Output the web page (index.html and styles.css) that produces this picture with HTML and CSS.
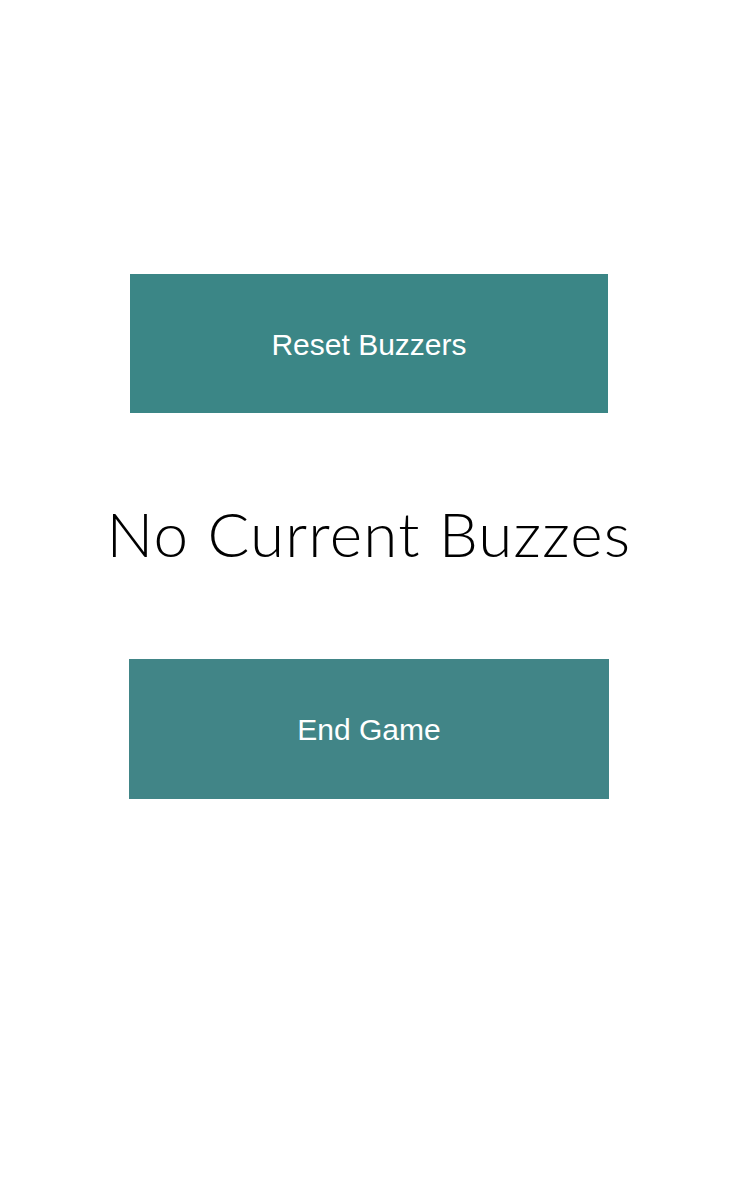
FILE: index.html
```html
<!DOCTYPE html>
<html>
<head>
<meta charset="utf-8">
<link rel="stylesheet" href="styles.css">
</head>
<body>
<main class="page">
  <button class="btn btn-reset">Reset Buzzers</button>
  <h1 class="status">No Current Buzzes</h1>
  <button class="btn btn-end">End Game</button>
</main>
</body>
</html>
```
FILE: styles.css
```css
html, body {
  margin: 0;
  padding: 0;
  background: #ffffff;
}
.page {
  display: flex;
  flex-direction: column;
  align-items: center;
  padding-top: 274px;
  padding-left: 3px;
  width: 735px;
  box-sizing: border-box;
}
.btn {
  border: none;
  margin: 0;
  color: #ffffff;
  font-family: "Liberation Sans", Arial, sans-serif;
  font-size: 30px;
  height: 140px;
  padding: 2px 0 0 0;
  cursor: pointer;
}
.btn-reset {
  width: 478px;
  height: 139px;
  background: #3b8686;
}
.btn-end {
  width: 480px;
  background: #418587;
}
.status {
  margin: 0;
  height: 246px;
  padding-bottom: 6px;
  box-sizing: border-box;
  display: flex;
  align-items: center;
  justify-content: center;
  font-family: Lato, "Open Sans", sans-serif;
  font-weight: 300;
  font-size: 62px;
  color: #000000;
  letter-spacing: 1.2px;
}
```
